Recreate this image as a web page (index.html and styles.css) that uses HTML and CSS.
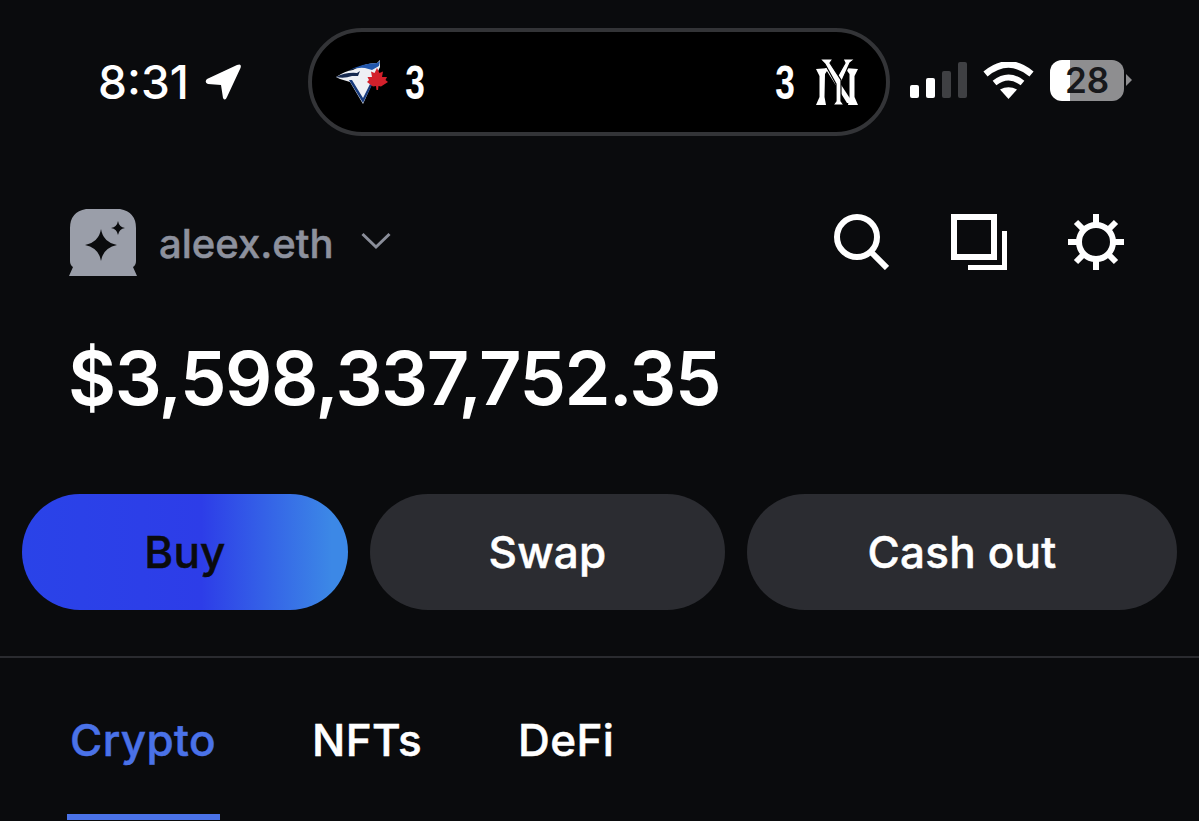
FILE: index.html
```html
<!DOCTYPE html>
<html lang="en">
<head>
<meta charset="utf-8">
<title>Wallet</title>
<link rel="stylesheet" href="styles.css">
</head>
<body>
<main class="screen">
  <header class="status">
    <div class="clock">
      <span class="time">8:31</span>
      <svg class="arrow" viewBox="0 0 37 36"><path d="M2 15 L32 1 Q37 -1 35.500 4 L22 33 Q20 37.500 18 34 L16 21 L3 20 Q-1 18 2 15Z" fill="#fff"/></svg>
    </div>
    <div class="island">
      <div class="team">
        <svg class="jays" viewBox="0 0 52 44">
          <path d="M0 17 Q9 11 17 10 Q29 3 41 3 L44 0 L44 7 L36 24 L27 44 L14 22 L4 19Z" fill="#eef0f5"/>
          <path d="M12 11 Q27 3 41 3 L44 1 L43 6 L36 10 L29 8 Q20 7 12 11Z" fill="#2257ad"/>
          <path d="M0 17 Q10 12 21 13 L24 11 L22 16 L16 16 Q8 19 0 17Z" fill="#16294f"/>
          <path d="M13 20 L27 43 L36 25 L34 24 L27 38 L16 20Z" fill="#173a7c"/>
          <path d="M41 8 L43.500 13 L47 11.500 L46 17 L51 17 L49.500 20 L52 22 L45 26.500 L42.500 26 L42 30 L40.500 30 L40 26 L37 26.500 L31 22 L33 20 L31.500 17 L36 17 L35 11.500 L38.500 13Z" fill="#d3202b"/>
        </svg>
        <span class="score">3</span>
      </div>
      <div class="team team-away">
        <span class="score">3</span>
        <svg class="yankees" viewBox="0 0 42 46">
          <g fill="#fff">
            <path d="M0 10 L13 9 L9 15 L8.500 38 L10 46 L0 46 L3.500 38 L3.500 17Z"/>
            <path d="M29 9 L42 10 L38.500 17 L38.500 38 L42 46 L32 46 L33.500 38 L33.500 15Z"/>
            <path d="M9 9 L14 9 L37 44 L31 44Z"/>
          </g>
          <g fill="#fff" stroke="#000" stroke-width="1.200">
            <path d="M27 0 L39 0 L34 4 L24.500 25 L20 20 L29 4Z"/>
            <path d="M4 0 L17 0 L14 4 L25 21 L25 42 L28 46 L17 46 L20 42 L20 25 L9 5Z"/>
          </g>
        </svg>
      </div>
    </div>
    <div class="indicators">
      <div class="signal">
        <span class="bar bar-1 on"></span>
        <span class="bar bar-2 on"></span>
        <span class="bar bar-3"></span>
        <span class="bar bar-4"></span>
      </div>
      <svg class="wifi" viewBox="0 0 51 37">
        <path d="M25.500 37 L17 27.500 Q25.500 23 34 27.500Z" fill="#fff"/>
        <path d="M11.500 21 Q25.500 10 39.500 21" fill="none" stroke="#fff" stroke-width="6"/>
        <path d="M2.500 12 Q25.500 -7 48.500 12" fill="none" stroke="#fff" stroke-width="6.500"/>
      </svg>
      <div class="battery-wrap">
        <div class="battery"><span class="level">28</span></div>
        <span class="nub"></span>
      </div>
    </div>
  </header>

  <section class="account">
    <div class="identity">
      <svg class="avatar" viewBox="0 0 68 68">
        <path d="M17 0 H51 Q67 3 67 19 V52 Q67 56 64 58 L68 67 H0 L4 58 Q1 56 1 52 V19 Q1 3 17 0Z" fill="#9a9ea9"/>
        <path d="M32 20 Q34 33 48 36 Q34 39 32 52 Q30 39 16 36 Q30 33 32 20Z" fill="#0a0b0d"/>
        <path d="M49 12 Q50 18 56 19 Q50 20 49 26 Q48 20 42 19 Q48 18 49 12Z" fill="#0a0b0d"/>
      </svg>
      <span class="name">aleex.eth</span>
      <svg class="chevron" viewBox="0 0 30 18"><path d="M1.500 2 L15 15 L28.500 2" fill="none" stroke="#8a8e99" stroke-width="3"/></svg>
    </div>
    <div class="tools">
      <svg class="tool" viewBox="0 0 56 56">
        <circle cx="24" cy="23" r="20" fill="none" stroke="#fff" stroke-width="6"/>
        <path d="M38 38 L54 54" fill="none" stroke="#fff" stroke-width="6"/>
      </svg>
      <svg class="tool" viewBox="0 0 56 56">
        <rect x="3" y="3" width="40" height="40" fill="none" stroke="#fff" stroke-width="6"/>
        <path d="M54 17 V54 H17" fill="none" stroke="#fff" stroke-width="6"/>
      </svg>
      <svg class="tool" viewBox="0 0 56 56">
        <circle cx="28" cy="28" r="17" fill="none" stroke="#fff" stroke-width="6"/>
        <path d="M28 0 V11 M28 45 V56 M0 28 H11 M45 28 H56 M8 8 L15 15 M41 41 L48 48 M48 8 L41 15 M15 41 L8 48" fill="none" stroke="#fff" stroke-width="6"/>
      </svg>
    </div>
  </section>

  <h1 class="balance">$3,598,337,752.35</h1>

  <div class="actions">
    <button class="action buy">Buy</button>
    <button class="action swap">Swap</button>
    <button class="action cash">Cash out</button>
  </div>

  <nav class="tabs">
    <a class="tab active">Crypto</a>
    <a class="tab">NFTs</a>
    <a class="tab">DeFi</a>
  </nav>
</main>
</body>
</html>
```
FILE: styles.css
```css
* { box-sizing: border-box; }
html, body { margin: 0; height: 100%; }
body { background: #0a0b0d; color: #fff; font-family: Inter, "Liberation Sans", sans-serif; overflow: hidden; }
.screen { width: 1199px; height: 821px; overflow: hidden; display: flex; flex-direction: column; }

.status { display: flex; align-items: center; height: 108px; margin-top: 28px; padding-left: 98px; }
.clock { display: flex; align-items: center; gap: 16px; width: 210px; }
.time { font-size: 46px; font-weight: 500; line-height: 1; }
.arrow { width: 37px; height: 36px; }
.island { width: 582px; height: 108px; border: 4px solid #333437; border-radius: 54px; background: #000; display: flex; align-items: center; justify-content: space-between; padding: 0 28px 0 24px; }
.team { display: flex; align-items: center; gap: 17px; }
.team-away { gap: 21px; }
.jays { width: 52px; height: 44px; }
.yankees { width: 42px; height: 46px; }
.score { width: 20px; display: flex; justify-content: center; font-family: "Liberation Sans", sans-serif; font-size: 49px; font-weight: 700; line-height: 1; transform: scaleX(.72); }
.indicators { display: flex; align-items: center; margin: 0 0 4px 20px; }
.signal { display: flex; align-items: flex-end; gap: 7px; height: 36px; }
.bar { width: 9px; border-radius: 2px; background: #3f4043; }
.bar.on { background: #fff; }
.bar-1 { height: 13px; }
.bar-2 { height: 20px; }
.bar-3 { height: 27px; }
.bar-4 { height: 36px; }
.wifi { width: 51px; height: 37px; margin-left: 16px; }
.battery-wrap { display: flex; align-items: center; gap: 2px; margin-left: 16px; }
.battery { width: 74px; height: 41px; border-radius: 12px; background: linear-gradient(90deg, #fff 0 27%, #8e8e90 27% 100%); display: flex; align-items: center; justify-content: center; }
.level { color: #17181b; font-size: 35px; font-weight: 600; line-height: 1; }
.nub { width: 6px; height: 12px; background: #8e8e90; clip-path: polygon(0 0, 100% 50%, 0 100%); }

.account { display: flex; align-items: center; justify-content: space-between; margin-top: 73px; padding: 0 75px 0 69px; height: 68px; }
.identity { display: flex; align-items: center; }
.avatar { width: 68px; height: 68px; }
.name { font-size: 40px; font-weight: 500; -webkit-text-stroke: .5px #8d919d; color: #8d919d; margin-left: 22px; }
.chevron { width: 30px; height: 18px; margin-left: 27px; margin-bottom: 4px; }
.tools { display: flex; gap: 61.5px; margin-top: -3px; }
.tool { width: 56px; height: 56px; }

.balance { margin: 61px 0 0 68px; font-size: 74px; font-weight: 600; line-height: 80px; letter-spacing: -1.5px; }

.actions { display: flex; gap: 22px; margin-top: 76px; padding-left: 22px; }
.action { height: 116px; border: 0; border-radius: 58px; font-family: inherit; font-size: 44px; font-weight: 500; -webkit-text-stroke: .5px currentColor; letter-spacing: .2px; color: #fff; background: #2b2c31; padding: 0; }
.buy { width: 326px; color: #0a0b0d; background: linear-gradient(90deg, #2a43e8 0%, #2d3de8 55%, #3c88e6 95%); }
.swap { width: 355px; }
.cash { width: 430px; }

.tabs { display: flex; gap: 96px; margin-top: 46px; padding: 54px 0 0 70px; border-top: 2px solid #2a2b2f; }
.tab { font-size: 44px; font-weight: 500; -webkit-text-stroke: .5px currentColor; letter-spacing: .4px; line-height: 56px; position: relative; }
.tab.active { color: #4a72e8; }
.tab.active::after { content: ""; position: absolute; left: -3px; right: -4px; top: 102px; height: 6px; background: #4a72e8; }
```
